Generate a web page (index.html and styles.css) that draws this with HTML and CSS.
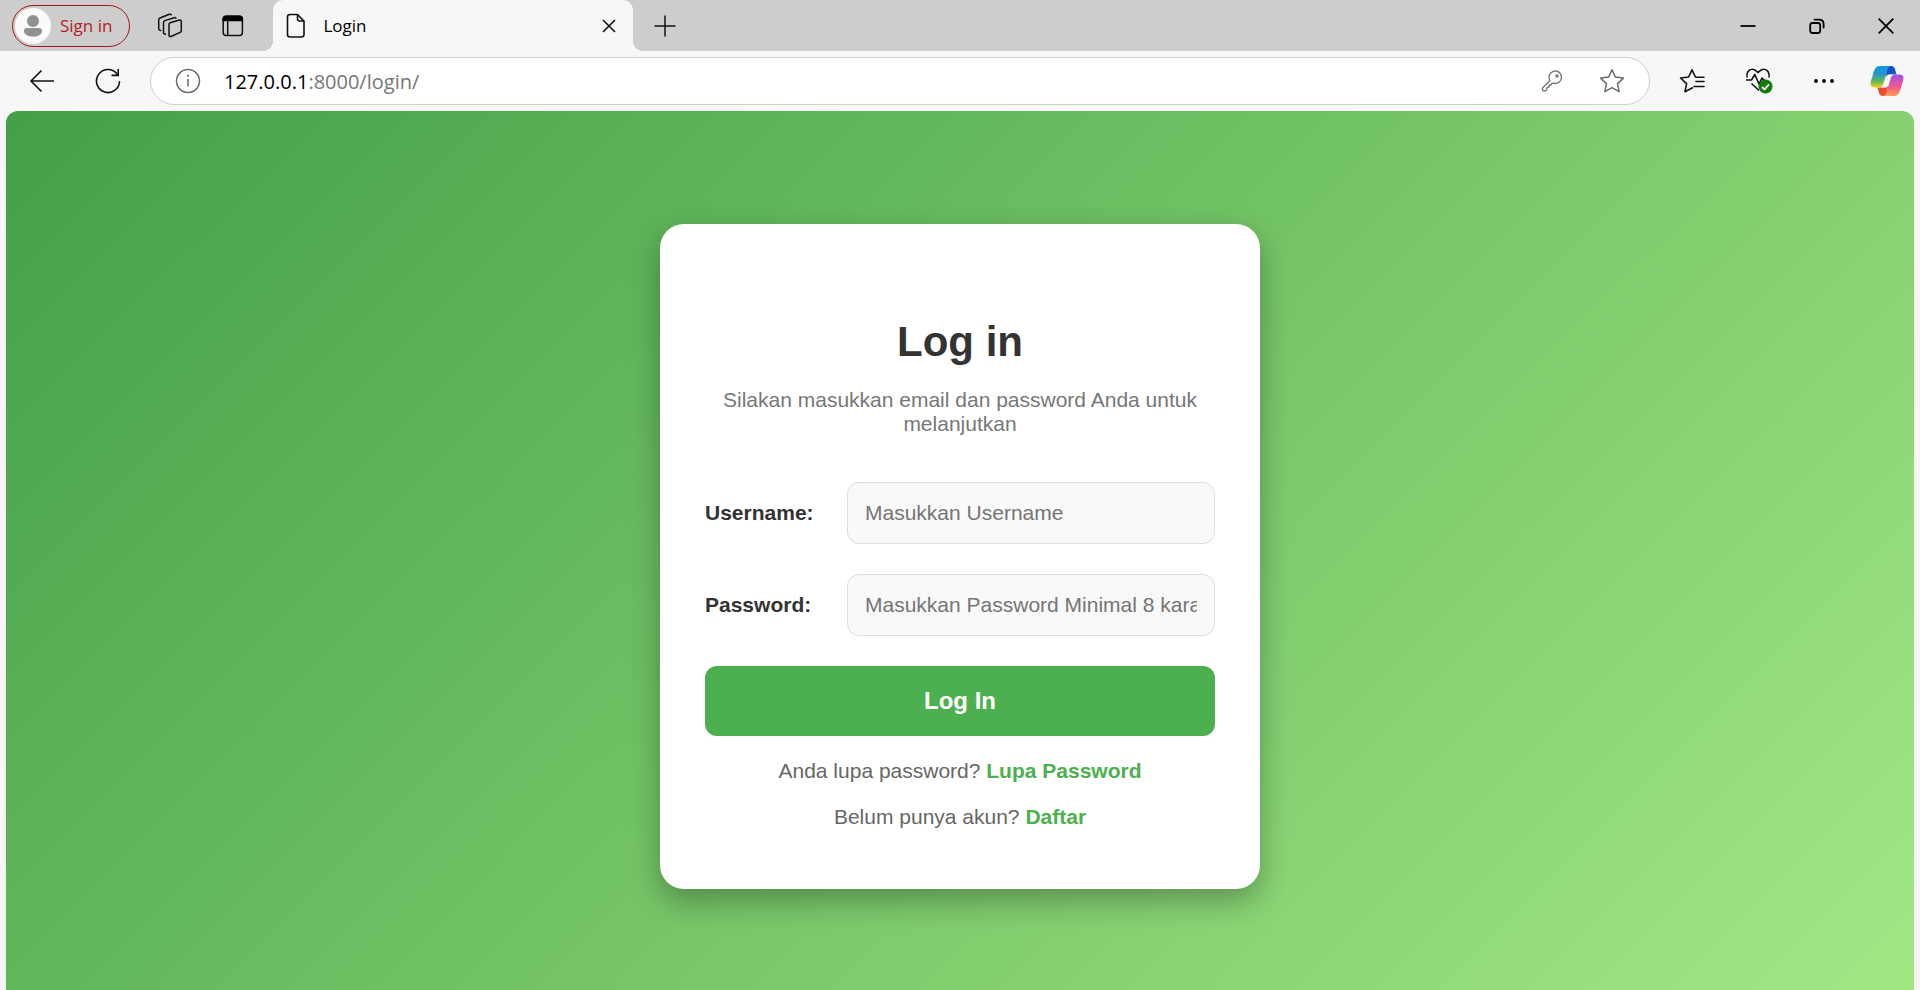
FILE: index.html
```html
<!DOCTYPE html>
<html lang="id">
<head>
<meta charset="utf-8">
<title>Login</title>
<link rel="stylesheet" href="styles.css">
</head>
<body>
<div class="browser">
  <header class="tabstrip">
    <button class="profile" type="button">
      <svg class="avatar" width="36" height="36" viewBox="0 0 36 36"><circle cx="18" cy="18" r="18" fill="#fafafa"/><circle cx="18" cy="13" r="6" fill="#919191"/><path d="M9 23q0-3 3-3h12q3 0 3 3c0 3.500-4 5.500-9 5.500S9 26.500 9 23z" fill="#919191"/></svg>
      <span>Sign in</span>
    </button>
    <button class="icon-btn workspaces" type="button" aria-label="Workspaces">
      <svg width="26" height="26" viewBox="0 0 26 26" fill="none" stroke="#111" stroke-width="1.500" stroke-linejoin="round" stroke-linecap="round"><path d="M12 11.500q0-1.200 1.100-1.700l8.500-2.600q2.700-.7 2.700 1.500v9q0 1.200-1.200 1.700l-8.500 3.900q-2.600 1-2.600-1.300z"/><path d="M8.500 21.300l-1-.2q-1-.3-1-1.600V9.500q0-1.400 1.300-1.900l9.400-2.900q1.200-.3 1.700.4"/><path d="M3.600 17.600q-1.900-.2-1.900-2V7q0-1.400 1.300-2l9.300-3.700q1.400-.4 1.900.5"/></svg>
    </button>
    <button class="icon-btn tabactions" type="button" aria-label="Tab actions">
      <svg width="22" height="22" viewBox="0 0 22 22"><rect x="1.200" y="1.200" width="19.200" height="19.200" rx="3" fill="none" stroke="#111" stroke-width="1.500"/><path d="M.5 6.300V4Q.5.500 4 .5h13.500Q21 .5 21 4v2.300z"/><path d="M5.700 6v14" stroke="#111" stroke-width="1.500"/></svg>
    </button>
    <div class="tab">
      <svg width="20" height="26" viewBox="0 0 20 26" fill="none" stroke="#111" stroke-width="1.600" stroke-linejoin="round"><path d="M4 1.500h7.500l6.500 6.500v13.500q0 2.500-2.500 2.500H4q-2.500 0-2.500-2.500V4Q1.500 1.500 4 1.500z"/><path d="M11.500 1.500v4.500q0 2 2 2H18"/></svg>
      <span class="tab-title">Login</span>
      <button class="icon-btn" type="button" aria-label="Close tab"><svg width="14" height="14" viewBox="0 0 14 14" stroke="#111" stroke-width="1.600"><path d="M1 1l12 12M13 1L1 13"/></svg></button>
    </div>
    <button class="icon-btn newtab" type="button" aria-label="New tab"><svg width="22" height="22" viewBox="0 0 22 22" stroke="#111" stroke-width="1.500"><path d="M11 .5v21M.5 11h21"/></svg></button>
    <div class="window-controls">
      <button class="icon-btn" type="button" aria-label="Minimize"><svg width="16" height="16" viewBox="0 0 16 16"><path d="M.5 8h15" stroke="#000" stroke-width="1.800"/></svg></button>
      <button class="icon-btn" type="button" aria-label="Restore"><svg width="16" height="16" viewBox="0 0 16 16" fill="none" stroke="#000" stroke-width="1.800"><rect x="1.200" y="5" width="10" height="10" rx="2.200"/><path d="M5.500 1.600h4.500Q14.600 1.600 14.600 6v3.500" stroke-linecap="round"/></svg></button>
      <button class="icon-btn" type="button" aria-label="Close"><svg width="16" height="16" viewBox="0 0 16 16" stroke="#000" stroke-width="1.800"><path d="M.7.7l14.600 14.600M15.300.7L.7 15.300"/></svg></button>
    </div>
  </header>

  <nav class="toolbar">
    <button class="icon-btn back" type="button" aria-label="Back"><svg width="26" height="24" viewBox="0 0 26 24" fill="none" stroke="#111" stroke-width="1.600"><path d="M25 12H2M12.500 1.500L2 12l10.500 10.500"/></svg></button>
    <button class="icon-btn reload" type="button" aria-label="Refresh"><svg width="26" height="26" viewBox="0 0 26 26" fill="none" stroke="#111" stroke-width="1.600"><path d="M24.500 13A11.500 11.500 0 1 1 21.600 5.400L23 7.200"/><path d="M23.200 1v6.400h-6.700"/></svg></button>
    <div class="address">
      <svg width="26" height="26" viewBox="0 0 26 26" fill="none" stroke="#6b6b6b" stroke-width="1.500"><circle cx="13" cy="13" r="11.500"/><path d="M13 11v7.500"/><circle cx="13" cy="7.800" r="1.100" fill="#6b6b6b" stroke="none"/></svg>
      <div class="url"><span class="host">127.0.0.1</span>:8000/login/</div>
      <button class="icon-btn" type="button" aria-label="Saved passwords"><svg width="22" height="22" viewBox="0 0 22 22" fill="none" stroke="#777" stroke-width="1.400" stroke-linejoin="round"><path d="M9 10.500A6.200 6.200 0 1 1 13 13.300l-2.100.1-.9 1.600-2 .2v1.900l-2 .5-.2 1.800L4.600 20.700H2.500Q1.500 20.700 1.500 19.500v-1.600z"/><circle cx="16" cy="6" r="1.100"/></svg></button>
      <button class="icon-btn star" type="button" aria-label="Add to favorites"><svg width="26" height="26" viewBox="0 0 26 26" fill="none" stroke="#6b6b6b" stroke-width="1.500" stroke-linejoin="round"><path d="M13 1.800l3.400 7.300 8 1-5.900 5.500 1.600 8L13 19.700l-7.100 3.900 1.600-8L1.600 10.100l8-1z"/></svg></button>
    </div>
    <button class="icon-btn" type="button" aria-label="Favorites"><svg width="26" height="26" viewBox="0 0 26 26" fill="none" stroke="#111" stroke-width="1.600" stroke-linejoin="round" stroke-linecap="round"><path d="M13.500 19.800L6 23.700l1.600-8L1.500 10l8.100-1L13 1.800 16.400 9l2 .3M17 13.500h8M15 18.500h10M19 9.300h6"/></svg></button>
    <button class="icon-btn essentials" type="button" aria-label="Browser essentials"><svg width="28" height="28" viewBox="0 0 28 28" fill="none" stroke="#111" stroke-width="1.600" stroke-linejoin="round"><path d="M2.200 10.500C1 6 3.500 2.500 7.200 2.300 10 2.200 11.500 4 13 5.500 14.500 4 16 2.200 18.800 2.300 22.500 2.500 25 6 23.800 10.500M1 13h5.500L9.800 7.500l4.200 9.500 3-6 1.500 2H20M6.500 16.500L14 23.500"/><circle cx="20.500" cy="19.500" r="7" fill="#107c10" stroke="none"/><path d="M17 20l2.500 2.300 4.500-5" stroke="#fff" stroke-width="1.800"/></svg></button>
    <button class="icon-btn" type="button" aria-label="More"><svg width="22" height="6" viewBox="0 0 22 6"><circle cx="3" cy="3" r="1.900"/><circle cx="11" cy="3" r="1.900"/><circle cx="19" cy="3" r="1.900"/></svg></button>
    <button class="icon-btn copilot" type="button" aria-label="Copilot">
      <svg width="34" height="32" viewBox="0 0 34 32">
        <defs>
          <linearGradient id="cool" x1="0" y1="0" x2="0" y2="1"><stop offset="0" stop-color="#1595e8"/><stop offset=".35" stop-color="#2296cf"/><stop offset=".7" stop-color="#5eb65a"/><stop offset="1" stop-color="#f4cf12"/></linearGradient>
          <linearGradient id="warm" x1="0" y1="0" x2="0" y2="1"><stop offset="0" stop-color="#a551e8"/><stop offset=".55" stop-color="#ef5596"/><stop offset="1" stop-color="#ffa052"/></linearGradient>
          <linearGradient id="fold" x1="0" y1="0" x2="1" y2="1"><stop offset="0" stop-color="#0b3fb5"/><stop offset="1" stop-color="#2365dd"/></linearGradient>
        </defs>
        <path d="M17 1h4q3 0 4 3l1.500 5.500H20q-3 0-4 3z" fill="url(#fold)"/>
        <path d="M17 31h-4q-3 0-4-3L7.500 22.500H14q3 0 4-3z" fill="#e9502f"/>
        <path d="M10 1h11q-2.600.5-3.600 4l-4 13.500q-1.200 4-5 4H4.500Q-.5 22.500.8 16.500L4 6Q5.500 1 10 1z" fill="url(#cool)"/>
        <path d="M24 31H13q2.600-.5 3.600-4l4-13.500q1.200-4 5-4h3.900q5 0 3.700 6L30 26q-1.500 5-6 5z" fill="url(#warm)"/>
        <path d="M17 10.500q1-1 3-1h2q-1.300 1.500-2 4l-2 7q-.6 2-2.500 2h-3q1.500-1.200 2-3z" fill="#fff"/>
      </svg>
    </button>
  </nav>

  <main class="page">
    <section class="card">
      <h1 class="title">Log in</h1>
      <p class="subtitle">Silakan masukkan email dan password Anda untuk melanjutkan</p>
      <form class="form">
        <div class="field"><label for="username">Username:</label><input id="username" type="text" placeholder="Masukkan Username"></div>
        <div class="field"><label for="password">Password:</label><input id="password" type="password" placeholder="Masukkan Password Minimal 8 karakter"></div>
        <button class="submit" type="submit">Log In</button>
      </form>
      <p class="note">Anda lupa password? <a href="#lupa">Lupa Password</a></p>
      <p class="note">Belum punya akun? <a href="#daftar">Daftar</a></p>
    </section>
  </main>
</div>
</body>
</html>
```
FILE: styles.css
```css
* { box-sizing: border-box; }
body { margin: 0; background: #f7f7f7; font-family: "Liberation Sans", Arial, sans-serif; }
button, input { font: inherit; }
svg { display: block; flex: none; }
.browser { display: flex; flex-direction: column; height: 100vh; overflow: hidden; font-family: "Open Sans", "Noto Sans", sans-serif; }

.icon-btn { display: flex; flex: none; padding: 0; border: 0; background: none; }
.tabstrip { display: flex; align-items: center; flex: none; height: 51px; padding: 0 26px 0 12px; background: #cdcdcd; }
.profile { display: flex; align-items: center; gap: 9px; height: 42px; padding: 0 17px 0 2px; border: 1px solid #a4161a; border-radius: 21px; background: none; color: #b3202a; font-size: 17px; }
.workspaces { margin-left: 27px; }
.tabactions { margin-left: 39px; }
.tab { position: relative; display: flex; align-items: center; gap: 17px; width: 360px; height: 51px; margin-left: 29px; padding: 0 17px 0 13px; border-radius: 10px 10px 0 0; background: #f7f7f7; font-size: 17px; }
.tab::before, .tab::after { content: ""; position: absolute; bottom: 0; width: 10px; height: 10px; }
.tab::before { right: 100%; background: radial-gradient(circle at 0 0, #cdcdcd 10px, #f7f7f7 10px); }
.tab::after { left: 100%; background: radial-gradient(circle at 100% 0, #cdcdcd 10px, #f7f7f7 10px); }
.tab-title { flex: 1; }
.newtab { margin-left: 21px; }
.window-controls { display: flex; align-items: center; gap: 53px; margin-left: auto; }

.toolbar { display: flex; align-items: center; gap: 40px; flex: none; height: 60px; padding: 0 16px 0 29px; }
.address { display: flex; align-items: center; flex: 1; gap: 36px; height: 48px; margin: 0 -11px; padding: 0 24px; border: 1px solid #cfcfcf; border-radius: 24px; background: #fff; }
.url { flex: 1; margin-left: -13px; color: #767676; font-size: 20px; }
.host { color: #000; }
.copilot { margin-left: -5px; }

.page { display: flex; flex: 1; justify-content: center; align-items: flex-start; margin: 0 6px; padding-top: 113px; border-radius: 12px 12px 0 0; background: linear-gradient(135deg, #43a047, #a3e785); font-family: "Liberation Sans", Arial, sans-serif; font-size: 21px; line-height: 24px; }
.card { width: 600px; padding: 93px 45px 60px; border-radius: 24px; background: #fff; box-shadow: 0 12px 30px rgba(0, 0, 0, .3); text-align: center; }
.title { margin: 0 0 21px; color: #333; font-size: 42px; line-height: 50px; }
.subtitle { margin: 0 0 46px; color: #777; }
.form { display: grid; gap: 30px; margin-bottom: 23px; }
.field { display: flex; align-items: center; justify-content: space-between; }
.field label { color: #333; font-weight: bold; }
.field input { width: 368px; height: 62px; padding: 0 17px; border: 1px solid #ddd; border-radius: 12px; background: #f9f9f9; }
.field input::placeholder { color: #757575; }
.submit { height: 70px; border: 0; border-radius: 12px; background: #4caf50; color: #fff; font-size: 24px; font-weight: bold; }
.note { margin: 0 0 22px; color: #666; }
.note:last-child { margin-bottom: 0; }
.note a { color: #4caf50; font-weight: bold; text-decoration: none; }
```
